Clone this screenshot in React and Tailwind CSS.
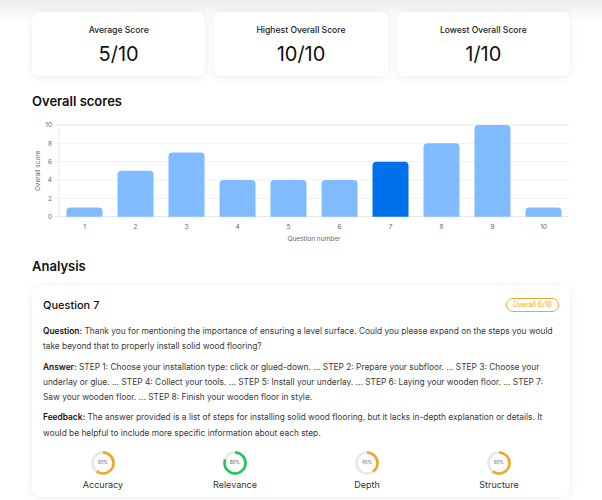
import React from "react";

const scores = [1, 5, 7, 4, 4, 4, 6, 8, 10, 1];

function Chart() {
  const left = 27;
  const right = 537;
  const top = 15;
  const bottom = 106.7;
  const unit = (bottom - top) / 10;
  const cw = (right - left) / 10;
  const ticks = [0, 2, 4, 6, 8, 10];
  return (
    <svg width="538" height="135" viewBox="0 0 538 135" className="block">
      {ticks.map((t) => {
        const y = bottom - t * unit;
        return (
          <g key={t}>
            <line x1={left - 4} x2={right} y1={y} y2={y} stroke={t === 0 || t === 10 ? "#e6e6e6" : "#f0f0f0"} strokeWidth="1" />
            <text x={left - 7} y={y + 2.2} textAnchor="end" fontSize="6.5" fill="#666" fontFamily="Inter, sans-serif">
              {t}
            </text>
          </g>
        );
      })}
      <line x1={left} x2={left} y1={top} y2={bottom} stroke="#ececec" strokeWidth="1" />
      {scores.map((s, i) => {
        const bw = 36;
        const x = left + cw * i + (cw - bw) / 2;
        const h = s * unit;
        const y = bottom - h;
        const r = 4;
        const d = `M${x},${bottom} L${x},${y + r} Q${x},${y} ${x + r},${y} L${x + bw - r},${y} Q${x + bw},${y} ${x + bw},${y + r} L${x + bw},${bottom} Z`;
        return <path key={i} d={d} fill={i === 6 ? "#0071ec" : "#80bbff"} />;
      })}
      {scores.map((s, i) => (
        <text key={i} x={left + cw * (i + 0.5)} y={119} textAnchor="middle" fontSize="6.5" fill="#666" fontFamily="Inter, sans-serif">
          {i + 1}
        </text>
      ))}
      <text x={(left + right) / 2} y={130.5} textAnchor="middle" fontSize="6.5" fill="#666" fontFamily="Inter, sans-serif">
        Question number
      </text>
      <text
        x={0}
        y={0}
        transform={`translate(8, ${(top + bottom) / 2}) rotate(-90)`}
        textAnchor="middle"
        fontSize="6.5"
        fill="#666"
        fontFamily="Inter, sans-serif"
      >
        Overall score
      </text>
    </svg>
  );
}

function Gauge({ value, color, label }) {
  const r = 10.5;
  const c = 2 * Math.PI * r;
  return (
    <div className="flex flex-col items-center">
      <div className="relative w-[24px] h-[24px]">
        <svg width="24" height="24" viewBox="0 0 24 24" className="block">
          <circle cx="12" cy="12" r={r} fill="none" stroke="#e8e8e8" strokeWidth="2.6" />
          <circle
            cx="12"
            cy="12"
            r={r}
            fill="none"
            stroke={color}
            strokeWidth="2.6"
            strokeDasharray={`${(c * value) / 100} ${c}`}
            transform="rotate(-90 12 12)"
          />
        </svg>
        <span className="absolute inset-0 flex items-center justify-center text-[4.5px] text-[#555]">{value}%</span>
      </div>
      <span className="mt-[4px] text-[9px] leading-[12px] text-[#333]">{label}</span>
    </div>
  );
}

function StatCard({ label, value }) {
  return (
    <div className="h-[64px] rounded-[7px] bg-white shadow-[0_1px_8px_rgba(0,0,0,0.08)] flex flex-col items-center pt-[12px]">
      <div className="text-[8.6px] leading-[12px] font-medium text-[#222]">{label}</div>
      <div className="mt-[6px] text-[20px] leading-[24px] text-[#111]">{value}</div>
    </div>
  );
}

export default function App() {
  return (
    <div className="min-h-[500px] bg-[linear-gradient(to_bottom,#ededed_0px,#ffffff_22px)] font-['Inter','Liberation_Sans',sans-serif] text-[#222]">
      <div className="px-[32px] pt-[12px]">
        <div className="grid grid-cols-3 gap-[9px]">
          <StatCard label="Average Score" value="5/10" />
          <StatCard label="Highest Overall Score" value="10/10" />
          <StatCard label="Lowest Overall Score" value="1/10" />
        </div>

        <h2 className="mt-[16px] text-[13px] leading-[18px] font-semibold text-[#111]">Overall scores</h2>
        <Chart />

        <h2 className="mt-[12px] text-[13px] leading-[18px] font-semibold text-[#111]">Analysis</h2>

        <div className="mt-[11px] rounded-[8px] bg-white shadow-[0_1px_8px_rgba(0,0,0,0.08)] px-[11px] pt-[11px] pb-[6px]">
          <div className="flex items-center justify-between h-[16px]">
            <div className="text-[11px] font-medium text-[#111]">Question 7</div>
            <div className="h-[14px] px-[6px] rounded-full border border-[#f5a623] text-[#f5a623] text-[7px] flex items-center">
              Overall 6/10
            </div>
          </div>
          <div className="mt-[11px] text-[8.35px] leading-[15.3px] text-[#3a3a3a] flex flex-col gap-[5px]">
            <p>
              <span className="font-semibold text-[#111]">Question:</span> Thank you for mentioning the importance of ensuring a level surface. Could you please expand on the steps you would take beyond that to properly install solid wood flooring?
            </p>
            <p>
              <span className="font-semibold text-[#111]">Answer:</span> STEP 1: Choose your installation type: click or glued-down. ... STEP 2: Prepare your subfloor. ... STEP 3: Choose your underlay or glue. ... STEP 4: Collect your tools. ... STEP 5: Install your underlay. ... STEP 6: Laying your wooden floor. ... STEP 7: Saw your wooden floor. ... STEP 8: Finish your wooden floor in style.
            </p>
            <p>
              <span className="font-semibold text-[#111]">Feedback:</span> The answer provided is a list of steps for installing solid wood flooring, but it lacks in-depth explanation or details. It would be helpful to include more specific information about each step.
            </p>
          </div>
          <div className="mt-[10px] -mx-[6px] grid grid-cols-4">
            <Gauge value={60} color="#f5a623" label="Accuracy" />
            <Gauge value={80} color="#22c55e" label="Relevance" />
            <Gauge value={40} color="#f5a623" label="Depth" />
            <Gauge value={60} color="#f5a623" label="Structure" />
          </div>
        </div>
      </div>
    </div>
  );
}
